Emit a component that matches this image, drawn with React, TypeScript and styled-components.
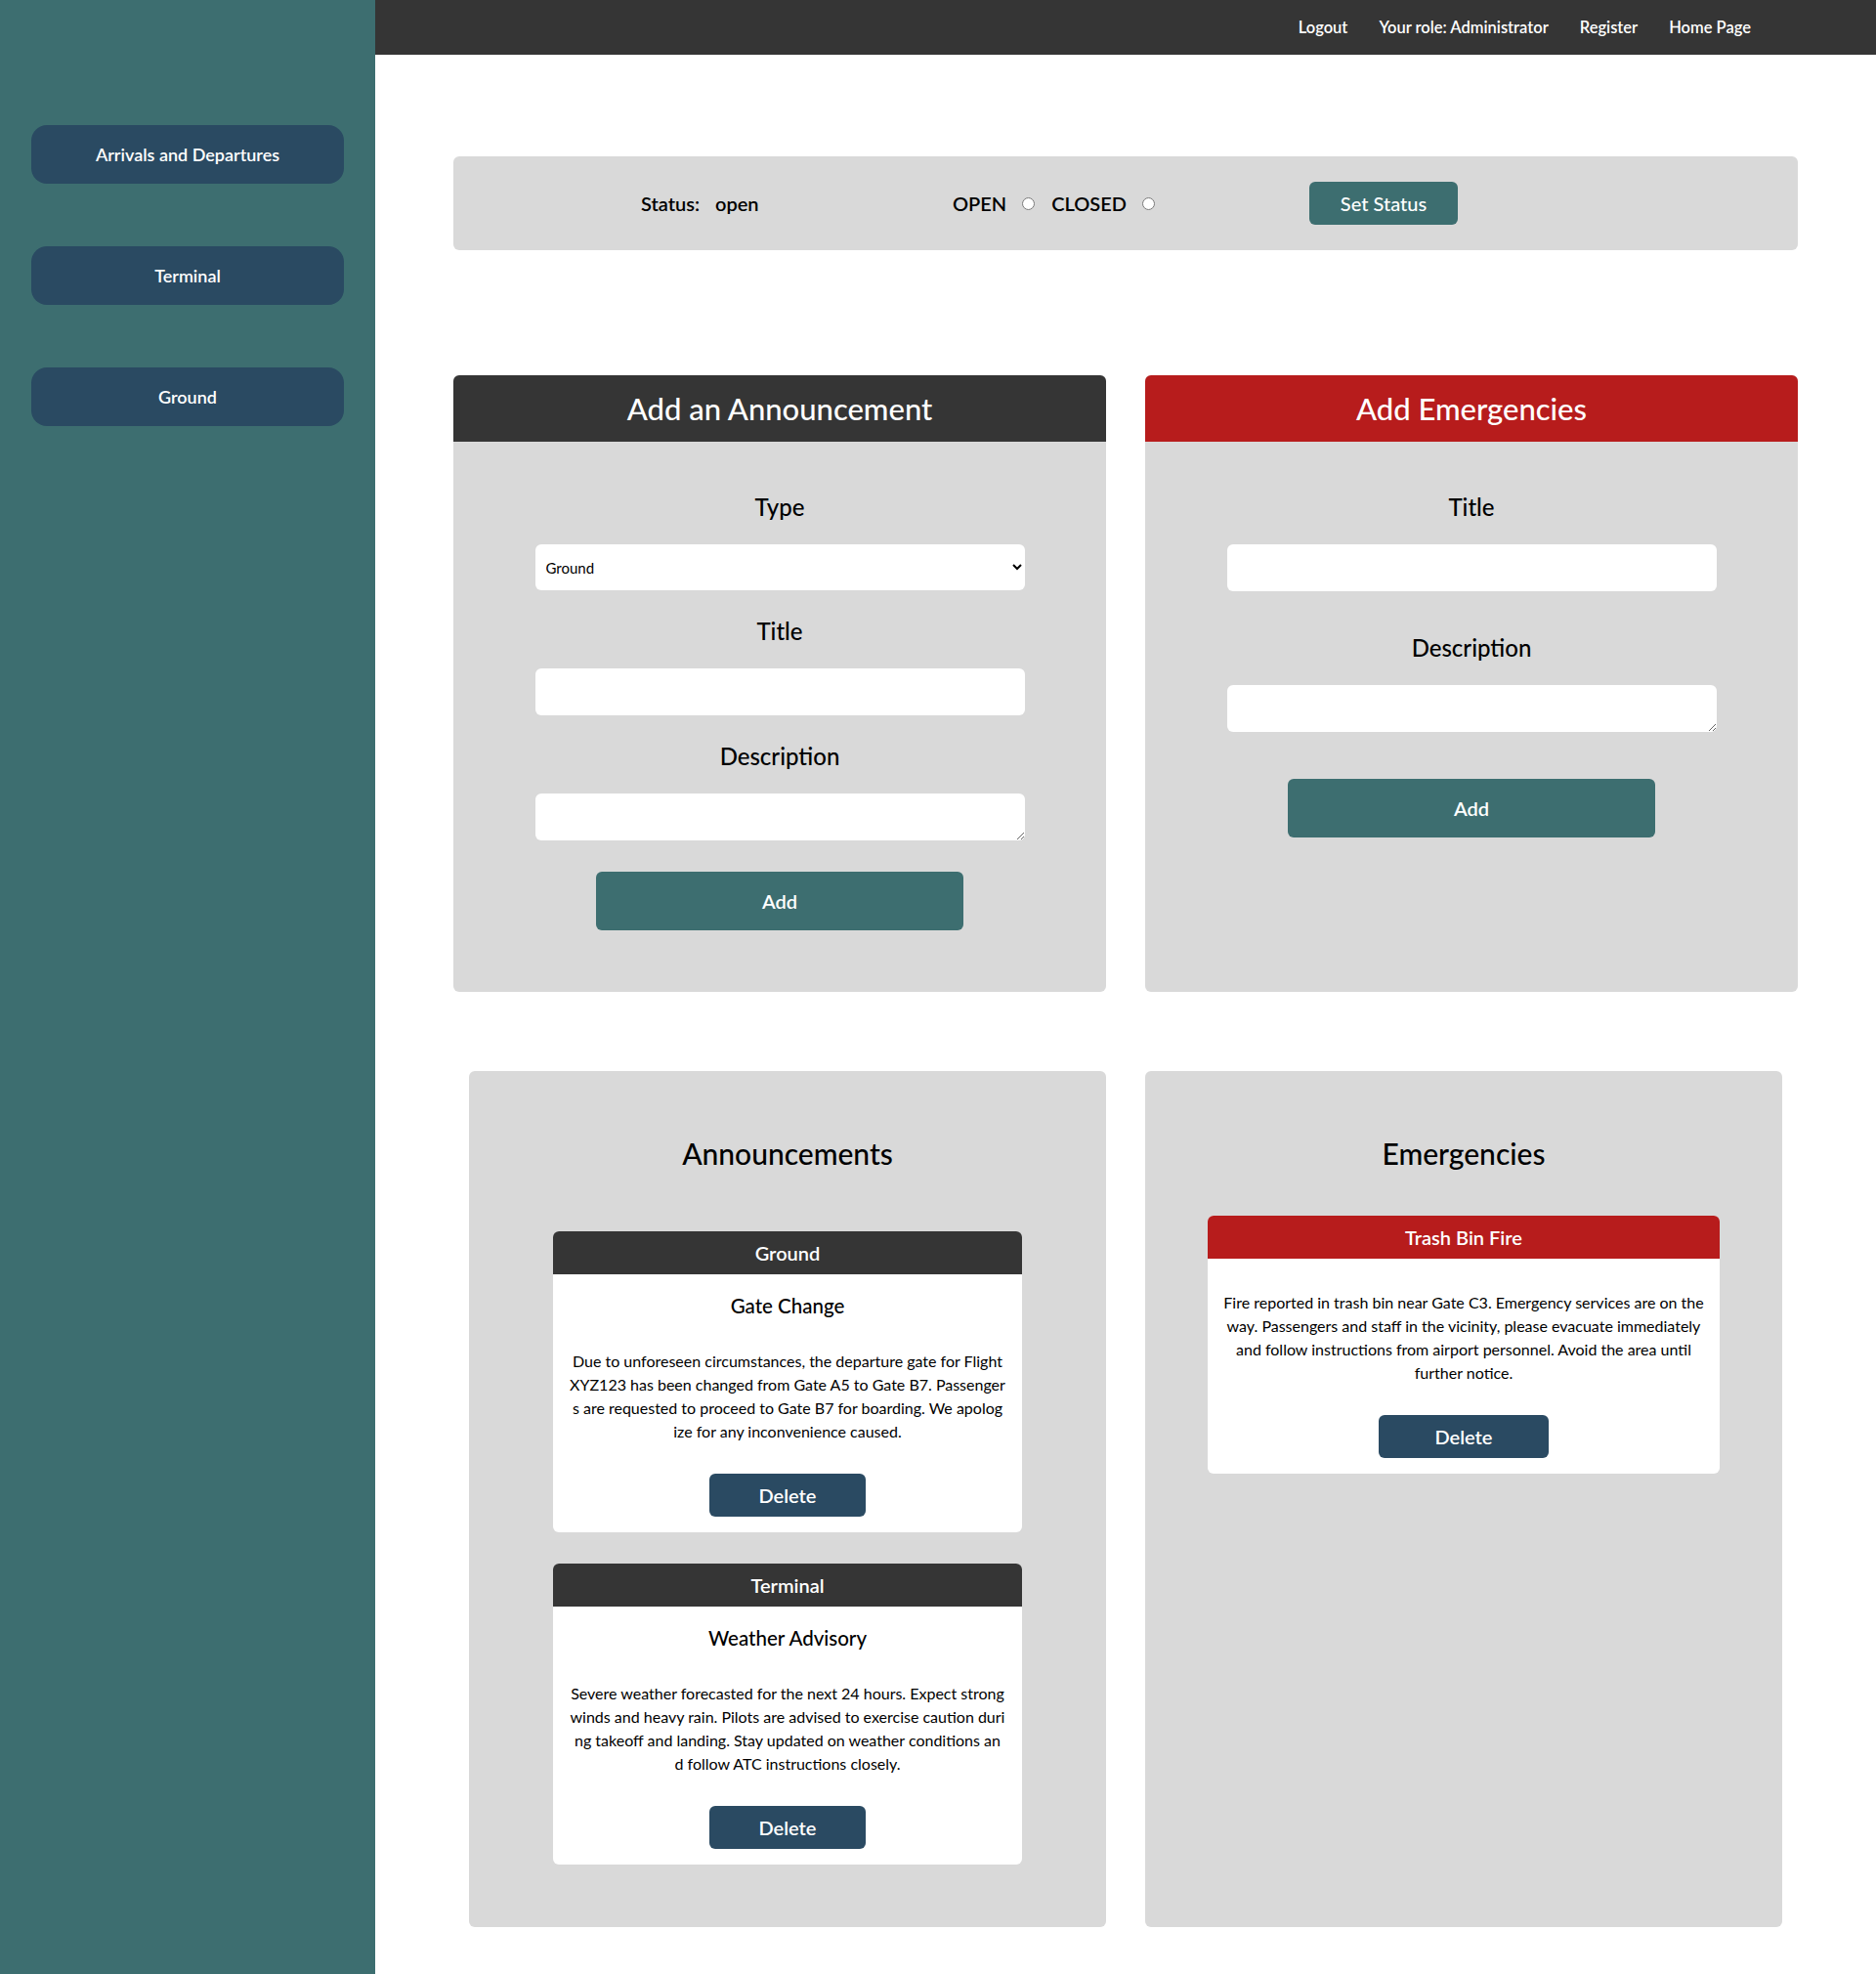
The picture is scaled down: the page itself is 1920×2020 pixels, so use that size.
import React from 'react';
import styled, { createGlobalStyle } from 'styled-components';

const FONT = `Lato, "Open Sans", "Noto Sans", sans-serif`;

const GlobalStyle = createGlobalStyle`
  html, body { margin: 0; padding: 0; }
  body { font-family: ${FONT}; background: #ffffff; color: #000000; }
  *, *::before, *::after { box-sizing: border-box; }
`;

const Layout = styled.div`
  display: flex;
  min-height: 2020px;
`;

const Sidebar = styled.aside`
  width: 384px;
  flex-shrink: 0;
  background: #3d6e70;
  padding: 128px 32px 0;
  display: flex;
  flex-direction: column;
  gap: 64px;
`;

const SideButton = styled.button`
  width: 320px;
  height: 60px;
  border: none;
  border-radius: 16px;
  background: #2a4a62;
  color: #ffffff;
  font-family: ${FONT};
  font-size: 18px;
  font-weight: 600;
  cursor: pointer;
`;

const MainColumn = styled.div`
  flex: 1;
  display: flex;
  flex-direction: column;
  min-width: 0;
`;

const TopBar = styled.header`
  height: 56px;
  background: #353535;
  display: flex;
  justify-content: flex-end;
  align-items: center;
  gap: 32px;
  padding-right: 128px;
`;

const NavLink = styled.a`
  color: #ffffff;
  font-size: 16.5px;
  font-weight: 600;
  text-decoration: none;
  cursor: pointer;
`;

const Content = styled.main`
  padding: 104px 80px 48px;
  display: flex;
  flex-direction: column;
`;

const StatusBar = styled.section`
  height: 96px;
  background: #d9d9d9;
  border-radius: 6px;
  display: flex;
  align-items: center;
  padding-left: 192px;
`;

const StatusGroup = styled.div`
  width: 319px;
  display: flex;
  gap: 16px;
  font-size: 20px;
  font-weight: 600;
`;

const RadioGroup = styled.div`
  width: 365px;
  display: flex;
  align-items: center;
  gap: 17px;
  font-size: 20px;
  font-weight: 600;
`;

const RadioLabel = styled.label`
  display: flex;
  align-items: center;
  gap: 16px;
`;

const Radio = styled.input`
  width: 13px;
  height: 13px;
  margin: 0;
`;

const SetStatusButton = styled.button`
  width: 152px;
  height: 44px;
  border: none;
  border-radius: 6px;
  background: #3d6e70;
  color: #ffffff;
  font-family: ${FONT};
  font-size: 20px;
  font-weight: 500;
  cursor: pointer;
`;

const TwoColumns = styled.div<{ $top: number; $inset?: number }>`
  display: grid;
  grid-template-columns: 1fr 1fr;
  gap: 40px;
  margin-top: ${(p) => p.$top}px;
  padding: 0 ${(p) => p.$inset ?? 0}px;
`;

const FormCard = styled.section`
  background: #d9d9d9;
  border-radius: 6px;
  overflow: hidden;
  display: flex;
  flex-direction: column;
`;

const FormHeader = styled.h2<{ $bg: string }>`
  margin: 0;
  height: 68px;
  background: ${(p) => p.$bg};
  color: #ffffff;
  font-size: 31px;
  font-weight: 500;
  display: flex;
  align-items: center;
  justify-content: center;
`;

const FormBody = styled.div`
  padding: 51px 0 63px;
  display: flex;
  flex-direction: column;
  align-items: center;
`;

const FieldLabel = styled.label<{ $top: number }>`
  display: block;
  font-size: 24px;
  font-weight: 500;
  line-height: 32px;
  margin: ${(p) => p.$top}px 0 22px;
`;

const TextInput = styled.input`
  width: 501px;
  height: 48px;
  border: none;
  border-radius: 6px;
  background: #ffffff;
  padding: 0 10px;
  font-family: ${FONT};
  font-size: 15px;
`;

const SelectInput = styled.select`
  width: 501px;
  height: 47px;
  border: none;
  border-radius: 6px;
  background: #ffffff;
  padding: 0 7px;
  font-family: ${FONT};
  font-size: 15px;
  color: #000;
`;

const TextArea = styled.textarea`
  width: 501px;
  height: 48px;
  border: none;
  border-radius: 6px;
  background: #ffffff;
  padding: 8px 10px;
  font-family: ${FONT};
  font-size: 15px;
  display: block;
`;

const AddButton = styled.button<{ $top: number }>`
  width: 376px;
  height: 60px;
  margin-top: ${(p) => p.$top}px;
  border: none;
  border-radius: 6px;
  background: #3d6e70;
  color: #ffffff;
  font-family: ${FONT};
  font-size: 20px;
  font-weight: 600;
  cursor: pointer;
`;

const ListPanel = styled.section`
  background: #d9d9d9;
  border-radius: 6px;
  padding: 64px 0 48px;
  display: flex;
  flex-direction: column;
  align-items: center;
`;

const PanelTitle = styled.h2`
  margin: 0 0 44px;
  font-size: 30px;
  font-weight: 500;
  line-height: 40px;
`;

const ItemCard = styled.article<{ $width: number; $gap: number }>`
  width: ${(p) => p.$width}px;
  margin: ${(p) => p.$gap}px 0;
  background: #ffffff;
  border-radius: 6px;
  overflow: hidden;
`;

const ItemHeader = styled.h3<{ $bg: string }>`
  margin: 0;
  height: 44px;
  background: ${(p) => p.$bg};
  color: #ffffff;
  font-size: 20px;
  font-weight: 600;
  display: flex;
  align-items: center;
  justify-content: center;
`;

const ItemBody = styled.div`
  padding: 0 16px 16px;
  display: flex;
  flex-direction: column;
  align-items: center;
  text-align: center;
`;

const ItemTitle = styled.h4`
  margin: 18px 0 0;
  font-size: 20.5px;
  font-weight: 500;
  line-height: 28px;
`;

const ItemText = styled.p<{ $top: number }>`
  margin: ${(p) => p.$top}px 0 0;
  font-size: 16px;
  line-height: 24px;
  word-break: break-all;
`;

const DeleteButton = styled.button<{ $width: number }>`
  width: ${(p) => p.$width}px;
  height: 44px;
  margin-top: 31px;
  border: none;
  border-radius: 6px;
  background: #2a4a62;
  color: #ffffff;
  font-family: ${FONT};
  font-size: 20px;
  font-weight: 600;
  cursor: pointer;
`;

const DARK = '#353535';
const RED = '#b71c1c';

const announcements = [
  {
    type: 'Ground',
    title: 'Gate Change',
    lines: [
      'Due to unforeseen circumstances, the departure gate for Flight',
      'XYZ123 has been changed from Gate A5 to Gate B7. Passenger',
      's are requested to proceed to Gate B7 for boarding. We apolog',
      'ize for any inconvenience caused.',
    ],
  },
  {
    type: 'Terminal',
    title: 'Weather Advisory',
    lines: [
      'Severe weather forecasted for the next 24 hours. Expect strong',
      'winds and heavy rain. Pilots are advised to exercise caution duri',
      'ng takeoff and landing. Stay updated on weather conditions an',
      'd follow ATC instructions closely.',
    ],
  },
];

const emergencies = [
  {
    title: 'Trash Bin Fire',
    lines: [
      'Fire reported in trash bin near Gate C3. Emergency services are on the',
      'way. Passengers and staff in the vicinity, please evacuate immediately',
      'and follow instructions from airport personnel. Avoid the area until',
      'further notice.',
    ],
  },
];

function Lines({ lines }: { lines: string[] }) {
  return (
    <>
      {lines.map((line, i) => (
        <React.Fragment key={i}>
          {i > 0 && <br />}
          {line}
        </React.Fragment>
      ))}
    </>
  );
}

export default function App() {
  return (
    <>
      <GlobalStyle />
      <Layout>
        <Sidebar>
          <SideButton>Arrivals and Departures</SideButton>
          <SideButton>Terminal</SideButton>
          <SideButton>Ground</SideButton>
        </Sidebar>
        <MainColumn>
          <TopBar>
            <NavLink>Logout</NavLink>
            <NavLink>Your role: Administrator</NavLink>
            <NavLink>Register</NavLink>
            <NavLink>Home Page</NavLink>
          </TopBar>
          <Content>
            <StatusBar>
              <StatusGroup>
                <span>Status:</span>
                <span>open</span>
              </StatusGroup>
              <RadioGroup>
                <RadioLabel>
                  OPEN <Radio type="radio" name="status" value="open" />
                </RadioLabel>
                <RadioLabel>
                  CLOSED <Radio type="radio" name="status" value="closed" />
                </RadioLabel>
              </RadioGroup>
              <SetStatusButton>Set Status</SetStatusButton>
            </StatusBar>

            <TwoColumns $top={128}>
              <FormCard>
                <FormHeader $bg={DARK}>Add an Announcement</FormHeader>
                <FormBody>
                  <FieldLabel $top={0}>Type</FieldLabel>
                  <SelectInput defaultValue="Ground">
                    <option value="Ground">Ground</option>
                    <option value="Terminal">Terminal</option>
                  </SelectInput>
                  <FieldLabel $top={26}>Title</FieldLabel>
                  <TextInput type="text" />
                  <FieldLabel $top={26}>Description</FieldLabel>
                  <TextArea />
                  <AddButton $top={32}>Add</AddButton>
                </FormBody>
              </FormCard>
              <FormCard>
                <FormHeader $bg={RED}>Add Emergencies</FormHeader>
                <FormBody>
                  <FieldLabel $top={0}>Title</FieldLabel>
                  <TextInput type="text" />
                  <FieldLabel $top={42}>Description</FieldLabel>
                  <TextArea />
                  <AddButton $top={48}>Add</AddButton>
                </FormBody>
              </FormCard>
            </TwoColumns>

            <TwoColumns $top={81} $inset={16}>
              <ListPanel>
                <PanelTitle>Announcements</PanelTitle>
                {announcements.map((a) => (
                  <ItemCard key={a.title} $width={480} $gap={16}>
                    <ItemHeader $bg={DARK}>{a.type}</ItemHeader>
                    <ItemBody>
                      <ItemTitle>{a.title}</ItemTitle>
                      <ItemText $top={31}>
                        <Lines lines={a.lines} />
                      </ItemText>
                      <DeleteButton $width={160}>Delete</DeleteButton>
                    </ItemBody>
                  </ItemCard>
                ))}
              </ListPanel>
              <ListPanel>
                <PanelTitle>Emergencies</PanelTitle>
                {emergencies.map((e) => (
                  <ItemCard key={e.title} $width={524} $gap={0}>
                    <ItemHeader $bg={RED}>{e.title}</ItemHeader>
                    <ItemBody>
                      <ItemText $top={33}>
                        <Lines lines={e.lines} />
                      </ItemText>
                      <DeleteButton $width={174}>Delete</DeleteButton>
                    </ItemBody>
                  </ItemCard>
                ))}
              </ListPanel>
            </TwoColumns>
          </Content>
        </MainColumn>
      </Layout>
    </>
  );
}
